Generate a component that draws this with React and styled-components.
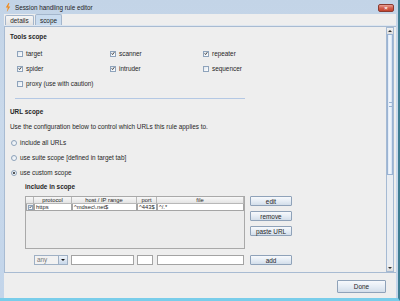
import React from 'react';
import styled, { createGlobalStyle, css } from 'styled-components';

const GlobalStyle = createGlobalStyle`
  * {
    margin: 0;
    padding: 0;
    box-sizing: border-box;
  }
  body {
    width: 400px;
    height: 301px;
    overflow: hidden;
    font-family: "Liberation Sans", Arial, sans-serif;
    font-size: 6.4px;
    color: #262626;
  }
`

const Window = styled.div`
  width: 400px;
  height: 301px;
  display: flex;
  flex-direction: column;
  background: linear-gradient(180deg, #c3d4e7 0%, #c9d9eb 40%, #c3d5ea 100%);
  border-right: 2px solid #3f7e93;
  border-bottom: 3px solid #79cdea;
`
const TitleBar = styled.div`
  height: 14px;
  flex: none;
  display: flex;
  align-items: center;
  padding: 1px 4px 0 5px;
  gap: 4px;
`
const Title = styled.span`
  flex: 1;
  font-size: 6.3px;
  color: #1b1b1b;
`
const CloseButton = styled.div`
  width: 16px;
  height: 8px;
  border-radius: 2px;
  border: 1px solid #8a3a30;
  background: linear-gradient(180deg, #e8a196 0%, #d2604e 50%, #c2412c 100%);
  display: flex;
  align-items: center;
  justify-content: center;
  color: #fff;
  font-size: 6px;
  font-weight: 700;
  line-height: 1;
`
const Client = styled.div`
  flex: 1;
  display: flex;
  flex-direction: column;
  margin: 0 2px 0 4px;
  background: #eeeeee;
`
const TabStrip = styled.div`
  height: 12px;
  flex: none;
  display: flex;
  align-items: flex-end;
  gap: 1px;
  padding-left: 1px;
  border-bottom: 1px solid #dde6f0;
`
const Tab = styled.div`
  height: ${p => (p.active ? 11 : 10)}px;
  width: ${p => p.w}px;
  display: flex;
  align-items: center;
  justify-content: center;
  border: 1px solid #a4b6cc;
  border-bottom: none;
  border-radius: 2px 2px 0 0;
  background: ${p => (p.active ? '#cadcef' : 'linear-gradient(180deg, #f6f6f6, #e2e2e2)')};
`
const ContentPanel = styled.div`
  flex: 1;
  display: flex;
  border: 1px solid #a8bbd2;
  border-right: none;
  min-height: 0;
`
const Viewport = styled.div`
  flex: 1;
  overflow: hidden;
  padding: 5px 0 0 5px;
  display: flex;
  flex-direction: column;
`
const SectionTitle = styled.div`
  height: 10px;
  line-height: 10px;
  font-weight: 700;
  padding-left: ${p => p.indent || 0}px;
  margin-top: ${p => p.mt || 0}px;
  flex: none;
`
const Text = styled.div`
  height: 10px;
  line-height: 10px;
  margin-top: ${p => p.mt || 0}px;
  flex: none;
`
const ToolGrid = styled.div`
  display: grid;
  grid-template-columns: 93px 93px 93px;
  grid-auto-rows: 15px;
  margin-top: 4px;
  padding-left: 7px;
  flex: none;
`
const Option = styled.label`
  display: flex;
  align-items: center;
  gap: 3px;
  white-space: nowrap;
`
const boxBase = css`
  width: 6px;
  height: 6px;
  flex: none;
  border: 1px solid #8ea3bb;
  background: linear-gradient(135deg, #dfe6ee, #ffffff);
  display: flex;
  align-items: center;
  justify-content: center;
`
const Box = styled.span`
  ${boxBase}
`
const Round = styled.span`
  ${boxBase}
  border-radius: 50%;
  &::after {
    content: '';
    display: ${p => (p.on ? 'block' : 'none')};
    width: 2px;
    height: 2px;
    border-radius: 50%;
    background: #222;
  }
`
const Separator = styled.div`
  height: 1px;
  width: 230px;
  margin-left: 5px;
  margin-top: 7px;
  background: #b4c8e4;
  flex: none;
`
const RadioList = styled.div`
  display: flex;
  flex-direction: column;
  margin-top: 3px;
  padding-left: 1px;
  flex: none;
  & > label {
    height: 15px;
  }
`
const TableArea = styled.div`
  display: flex;
  gap: 5px;
  margin-top: 4px;
  padding-left: 15px;
  flex: none;
`
const Table = styled.div`
  width: 220px;
  height: 53px;
  border: 1px solid #a9a9a9;
  background: #ececec;
`
const Row = styled.div`
  display: grid;
  grid-template-columns: 8px 38px 65px 20px 1fr;
  height: 7px;
`
const HeadCell = styled.div`
  border-right: 1px solid #b8b8b8;
  border-bottom: 1px solid #b8b8b8;
  background: linear-gradient(180deg, #f8f8f8, #e4e4e4);
  text-align: center;
  line-height: 6px;
  font-size: 5.8px;
  overflow: hidden;
  white-space: nowrap;
`
const Cell = styled.div`
  border: 1px solid #a5a5a5;
  border-top: none;
  background: ${p => (p.plain ? '#ececec' : '#ffffff')};
  line-height: 6px;
  font-size: 5.8px;
  padding-left: 1px;
  overflow: hidden;
  white-space: nowrap;
  display: flex;
  align-items: center;
  justify-content: ${p => (p.plain ? 'center' : 'flex-start')};
`
const SmallBox = styled(Box)`
  width: 5px;
  height: 5px;
`
const ButtonColumn = styled.div`
  display: flex;
  flex-direction: column;
  gap: 5px;
`
const Button = styled.div`
  width: ${p => p.w || 42}px;
  height: ${p => p.h || 10}px;
  flex: none;
  border: 1px solid #8fa2b9;
  border-radius: 1px;
  background: linear-gradient(180deg, #f7f9fc 0%, #e6edf5 50%, #d3deea 100%);
  display: flex;
  align-items: center;
  justify-content: center;
  white-space: nowrap;
`
const EntryRow = styled.div`
  display: flex;
  align-items: center;
  margin-top: 6px;
  padding-left: 24px;
  height: 10px;
  flex: none;
`
const Select = styled.div`
  width: 34px;
  height: 10px;
  display: flex;
  border: 1px solid #9fb0c4;
  background: #f2f2f2;
  margin-right: 3px;
`
const SelectValue = styled.div`
  flex: 1;
  padding-left: 2px;
  line-height: 8px;
  color: #777;
`
const SelectArrow = styled.div`
  width: 9px;
  border-left: 1px solid #9fb0c4;
  background: linear-gradient(180deg, #eef3f9, #c9d8ea);
  display: flex;
  align-items: center;
  justify-content: center;
  &::after {
    content: '';
    border-left: 2px solid transparent;
    border-right: 2px solid transparent;
    border-top: 2px solid #111;
  }
`
const Field = styled.div`
  width: ${p => p.w}px;
  height: 10px;
  margin-right: ${p => p.mr}px;
  border: 1px solid #a3a3a3;
  background: #ffffff;
  flex: none;
`
const ScrollBar = styled.div`
  width: 8px;
  flex: none;
  margin-right: 2px;
  display: flex;
  flex-direction: column;
  border: 1px solid #a5bad3;
  background: #e9edf2;
`
const ScrollArrow = styled.div`
  height: 6px;
  flex: none;
  display: flex;
  align-items: center;
  justify-content: center;
  background: linear-gradient(180deg, #f2f2f2, #dcdcdc);
  &::after {
    content: '';
    border-left: 2px solid transparent;
    border-right: 2px solid transparent;
    ${p => (p.up ? 'border-bottom: 2px solid #333;' : 'border-top: 2px solid #333;')}
  }
`
const Thumb = styled.div`
  height: 141px;
  flex: none;
  border: 1px solid #9ab3d3;
  background: linear-gradient(90deg, #dce8f6, #f6f9fd 50%, #cfdff2);
  display: flex;
  align-items: center;
  justify-content: center;
  &::after {
    content: '';
    width: 3px;
    height: 3px;
    border-top: 1px solid #9ab3d3;
    border-bottom: 1px solid #9ab3d3;
  }
`
const Track = styled.div`
  flex: 1;
`
const Footer = styled.div`
  height: 25px;
  flex: none;
  display: flex;
  align-items: center;
  justify-content: flex-end;
  padding: 1px 10px 0 0;
`

function Check({ checked }) {
  return (
    <Box>
      {checked && (
        <svg width="5" height="5" viewBox="0 0 5 5">
          <path d="M0.8 2.4 L2 3.8 L4.2 0.8" stroke="#1d1d1d" strokeWidth="1" fill="none" />
        </svg>
      )}
    </Box>
  );
}

const tools = [
  ['target', false], ['scanner', true], ['repeater', true],
  ['spider', true], ['intruder', true], ['sequencer', false],
  ['proxy (use with caution)', false],
];

export default function App() {
  return (
    <Window>
      <GlobalStyle />
      <TitleBar>
        <svg width="6" height="9" viewBox="0 0 6 9">
          <path d="M3.5 0 L0.8 4.6 L2.8 4.6 L1.8 9 L5.2 3.6 L3.2 3.6 L4.4 0 Z" fill="#f08a1c" />
        </svg>
        <Title>Session handling rule editor</Title>
        <CloseButton>×</CloseButton>
      </TitleBar>
      <Client>
        <TabStrip>
          <Tab w={29}>details</Tab>
          <Tab w={27} active>scope</Tab>
        </TabStrip>
        <ContentPanel>
          <Viewport>
            <SectionTitle>Tools scope</SectionTitle>
            <ToolGrid>
              {tools.map(([name, on]) => (
                <Option key={name}>
                  <Check checked={on} />
                  {name}
                </Option>
              ))}
            </ToolGrid>
            <Separator />
            <SectionTitle mt={8}>URL scope</SectionTitle>
            <Text mt={5}>Use the configuration below to control which URLs this rule applies to.</Text>
            <RadioList>
              <Option><Round />include all URLs</Option>
              <Option><Round />use suite scope [defined in target tab]</Option>
              <Option><Round on />use custom scope</Option>
            </RadioList>
            <SectionTitle indent={15} mt={2}>include in scope</SectionTitle>
            <TableArea>
              <Table>
                <Row>
                  <HeadCell />
                  <HeadCell>protocol</HeadCell>
                  <HeadCell>host / IP range</HeadCell>
                  <HeadCell>port</HeadCell>
                  <HeadCell>file</HeadCell>
                </Row>
                <Row>
                  <Cell plain>
                    <SmallBox>
                      <svg width="4" height="4" viewBox="0 0 5 5">
                        <path d="M0.8 2.4 L2 3.8 L4.2 0.8" stroke="#1d1d1d" strokeWidth="1" fill="none" />
                      </svg>
                    </SmallBox>
                  </Cell>
                  <Cell>https</Cell>
                  <Cell>^mdsec\.net$</Cell>
                  <Cell>^443$</Cell>
                  <Cell>^/.*</Cell>
                </Row>
              </Table>
              <ButtonColumn>
                <Button>edit</Button>
                <Button>remove</Button>
                <Button>paste URL</Button>
              </ButtonColumn>
            </TableArea>
            <EntryRow>
              <Select>
                <SelectValue>any</SelectValue>
                <SelectArrow />
              </Select>
              <Field w={63} mr={3} />
              <Field w={16} mr={4} />
              <Field w={87} mr={6} />
              <Button>add</Button>
            </EntryRow>
          </Viewport>
          <ScrollBar>
            <ScrollArrow up />
            <Thumb />
            <Track />
            <ScrollArrow />
          </ScrollBar>
        </ContentPanel>
        <Footer>
          <Button w={49} h={13}>Done</Button>
        </Footer>
      </Client>
    </Window>
  );
}
